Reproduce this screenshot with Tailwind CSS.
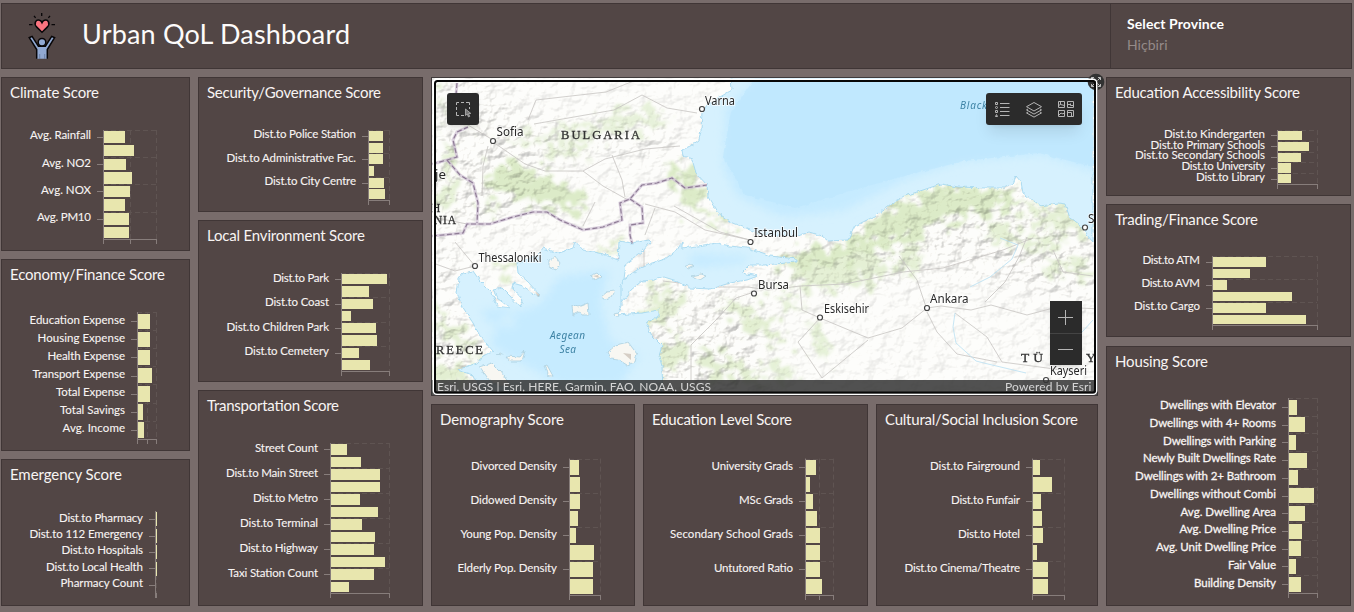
<!DOCTYPE html>
<html lang="en">
<head>
<meta charset="utf-8">
<title>Urban QoL Dashboard</title>
<script src="https://cdn.jsdelivr.net/npm/@tailwindcss/browser@4"></script>
</head>
<body class="h-[612px] w-[1354px] overflow-hidden bg-[#786c6b] pl-px pt-[3px] font-['Lato',sans-serif] text-[#fbf8f7]">

<header class="flex h-[66px] w-[1351px] border border-[#403636] bg-[#524645]">
  <div class="flex flex-1 items-center pl-[24px]">
    <svg class="h-[50px] w-[32px] shrink-0" viewBox="26 11 32 50" fill="none" stroke="#080608" stroke-width="1.5">
      <path d="M41.7 13v3M34 15.800l1.600 2.100M50 15.800l-1.600 2.100M29 24.700h3.500M51.500 24.700h3.500" stroke-width="1.300"/>
      <path d="M42 32.200l-5-4.800c-4-4-.8-8.500 2.600-7.200 1.300.4 2 1.400 2.400 2.400.4-1 1.100-2 2.400-2.400 3.400-1.300 6.600 3.200 2.600 7.200z" fill="#fb7580"/>
      <path d="M36.700 58.800V49.500L29.200 37.700l2.900-1.300 6.300 9.800h7l6.300-9.800 2.900 1.300-7.300 11.800v9.300" fill="#91a9d3"/>
      <circle cx="42" cy="42.300" r="3.800" fill="#91a9d3"/>
      <path d="M39.700 54v5M44.700 54v5" stroke-width=".7" stroke="#5e7195"/>
    </svg>
    <h1 class="ml-[24px]"><svg class="block h-16 w-[280px]" fill="#fdfbfa" font-family="Lato,sans-serif" font-size="27"><text x="0" y="39.500" textLength="268">Urban QoL Dashboard</text></svg></h1>
  </div>
  <div class="w-[241px] border-l border-[#403636] pl-4">
    <svg class="block h-16 w-[200px]" font-family="Lato,sans-serif" font-size="14"><text x="0" y="25" textLength="97" font-weight="700" fill="#fff">Select Province</text><text x="0" y="46" textLength="40.500" fill="#958b89">Hiçbiri</text></svg>
  </div>
</header>

<main class="mt-2 flex gap-2">
  <div class="flex w-[189px] flex-col gap-2">
    <section class="h-[174px] border border-[#403636] bg-[#524645]" data-chart="climate"></section>
    <section class="h-[192px] border border-[#403636] bg-[#524645]" data-chart="economy"></section>
    <section class="h-[147px] border border-[#403636] bg-[#524645]" data-chart="emergency"></section>
  </div>
  <div class="flex w-[225px] flex-col gap-2">
    <section class="h-[135px] border border-[#403636] bg-[#524645]" data-chart="security"></section>
    <section class="h-[162px] border border-[#403636] bg-[#524645]" data-chart="environment"></section>
    <section class="h-[216px] border border-[#403636] bg-[#524645]" data-chart="transport"></section>
  </div>
  <div class="flex w-[667px] flex-col gap-2">
    <section class="relative h-[319px]">
      <svg class="block h-[319px] w-[667px] overflow-visible" viewBox="431 77 667 319" font-family="'Noto Sans',sans-serif">
        <defs>
          <filter id="relief" x="0" y="0" width="1" height="1" color-interpolation-filters="sRGB">
            <feTurbulence type="fractalNoise" baseFrequency=".07 .09" numOctaves="4" seed="11"/>
            <feDiffuseLighting surfaceScale="5" diffuseConstant="1.270" lighting-color="#fffdf8"><feDistantLight azimuth="225" elevation="56"/></feDiffuseLighting>
          </filter>
          <filter id="rough" x="-.1" y="-.1" width="1.200" height="1.200">
            <feTurbulence type="fractalNoise" baseFrequency=".09" numOctaves="3" seed="4" result="n"/>
            <feDisplacementMap in="SourceGraphic" in2="n" scale="48" xChannelSelector="R" yChannelSelector="G"/>
            <feGaussianBlur stdDeviation="1.400"/>
          </filter>
          <filter id="coast" x="-.05" y="-.05" width="1.100" height="1.100" color-interpolation-filters="sRGB">
            <feTurbulence type="fractalNoise" baseFrequency=".2" numOctaves="2" seed="8" result="n"/>
            <feDisplacementMap in="SourceGraphic" in2="n" scale="4" xChannelSelector="R" yChannelSelector="G"/>
          </filter>
          <filter id="soft"><feGaussianBlur stdDeviation="5"/></filter>
          <filter id="soft2"><feGaussianBlur stdDeviation="14"/></filter>
          <mask id="hills" maskUnits="userSpaceOnUse" x="431" y="77" width="667" height="319">
            <rect x="431" y="77" width="667" height="319" fill="#505050"/>
            <g filter="url(#soft2)" fill="#ddd">
              <path d="M431 77h40l60 50 140 0v25H530l40 55-70 18-69 10z"/>
              <path d="M431 235l30 15 0 60 30 60-60 20zM640 290h110l20 110H660zM765 265l120-45 90-40 123 50v70l-150-30-183 20z"/>
            </g>
          </mask>
          <path id="blacksea" d="M731 77l1 13-12 7-13 8-5 8-1 17-2 10-7 5-10 5 1 6 9 3 4 14 11 12 1 12 9 15 13 10 20 8 8 4 40 2 11-4 13 4 6 5 20-1 7-14 20-10 16-12 14-8 36-12 17 3 27 1 20 0 8-4 3-8 5 6 2 11 18 13 17-3 7 1 5 14 10 8 6 8 7 8V77z"/>
          <path id="marmara" d="M682 248l15-2 20-3 13 3 17 2 16 5 7 3 27 3v3l-32 3-15 0-8 8 16 3-11 4-17 3-20 6-20-1-13-7-13-4-10 3-12 1-11 9-7 10-8 4-3-5 2-13 16-12 9-6 10-4 15-5 12-9 5-8z"/>
          <path id="aegean" d="M618 260l-15-6-20-4-8-9-2 7-15 5-15-5-6 8-20 7 1 10 9 8 13 14-3 1-14-10-10-3-1 5 11 12-3 7-10-11-8-8-9 2 4 8 13 10-13-2-5-13-12-12-7-10-10 2-4 5-2 15 5 13 11 17 7 13 13 15-10 5-6 7-20 7 16 5 10 21h180l-1-30-3-10 3-10-10-10-6-13 13-7v-6l-17 3-25 2 4-9v-21l3-6 2-15 16-12 9-10-2-2-17 3-13-2z"/>
          <clipPath id="seas"><use href="#blacksea"/><use href="#marmara"/><use href="#aegean"/></clipPath>
          <clipPath id="frame"><rect x="432" y="78" width="665" height="317"/></clipPath>
        </defs>
        <rect x="431" y="77" width="667" height="319" fill="#403a3b"/>
        <g clip-path="url(#frame)">
          <rect x="431" y="77" width="667" height="319" fill="#fdfdfb"/>
          <g filter="url(#rough)" fill="#dcebc8">
            <path d="M433 90l20 20 35 22 50 8 25-14 30-2 25-12 40-2 12 12-40 8-35 6-40 2-30 8-30-12-40-14-22-20z" opacity=".65"/>
            <path d="M486 170l20-8 25 8 30 12 25 20-6 12-22-2-25-12-30-4-18-10z"/>
            <path d="M440 175l20 10 0 20-24 5zM482 195l18 15-18 5zM446 142l12 10-8 25-12-20zM540 150l35-5 20 6-35 12z" opacity=".75"/>
            <path d="M667 165l24 6 8 16 6 26 25 16-8 2-28-18-16-26z"/>
            <path d="M433 300l15 20 20 20 15 20-18-8-32-30zM430 360l30 8 15 8-45 12zM590 250l30-10 5 12-25 4zM500 262l12 5 0 14-14-4z" opacity=".8"/>
            <path d="M640 312l26-12 20 0-12 18-32 12zM646 290l30 0-20 14zM718 300l32 4 15 14 22 14-14 14-32-20zM650 350l28-14 12 16-26 20zM700 350l40 10 30 20-60 0z" opacity=".8"/>
            <path d="M864 226l40-24 48-18 50 6 20 12-36 14-44 6-22 16-60 14-30 18-60-6 30-14 50-6z"/>
            <path d="M1020 195l20 14 40 0 10 20-30 4-34-16zM990 225l40 10 40 6-30 10-50-8zM1040 262l40 0 14 14-40-2zM790 262l60-14 40 10-20 26-70 6zM902 245l20 10-12 26-12-16z" opacity=".75"/>
            <path d="M808 320l18 14 4 30-14-12zM765 362l25 0 8 18-26 0zM770 290l24 8 14 14-24-6z" opacity=".7"/>
          </g>
          <rect x="431" y="77" width="667" height="319" filter="url(#relief)" mask="url(#hills)" class="mix-blend-multiply" opacity=".36"/>
          <g fill="none" stroke="#c7c4c2" stroke-width=".8">
            <path d="M493 142l32 22 20 7h38l22-12 40-10 35-3M583 171l20 15 25 14M697 113l-30-5-25-13-28 15-80 14M493 140l-30-18M488 146l-5 20-1 30M528 120l8-20 70-8 30-12M612 155l10 25 3 17M645 204l30 8 30 18 45 10M655 208l-10 27M475 266l-20 5-22-8M475 266l-20-24M644 247v20M750 240l-30-8-46-26"/>
            <path d="M663 281l50 6h35l20 3 32-4 45-2 58-12 40-4 60-18 30-12M754 292l-18 6-20 22-25 25 0 35M800 286l2 24 18 8 48 20 34-10 25-20 14-2 30 4 20-5 36 10 30-8 45 2M820 318l-22 24 24 36 46-38M927 310l-10-30-18-24M927 312l10 20 20 22 40 8M955 313l32 24 15 25 60 8M985 302l20-20 14-25 8-20M1053 250l10 22 30 4"/>
            <path d="M595 202l-12 24M437 218l30 6 23 0"/>
          </g>
          <path d="M970 287l20-10 22-18 6-14-18-7M955 313l-2 14 3 16 20 18 12 3 38 9M1093 320l-20 22" fill="none" stroke="#b9e0f3" stroke-width=".8"/>
          <path d="M432 164l15-4 10-3-4-17 4-8 11-5M457 83l-1 12M447 160l13 15 13 8 5 20-1 20M432 236l31-3 4-9h23l23-7 20-5h14l13 8 23 10 20-3 19-7-2-17 10-4 12-14 15-2 15-5 13 10 22-3M630 199l12 8 1 16-13 2v10l2 8-5 10-9 7" fill="none" stroke="#cfc2d4" stroke-width="3" opacity=".75"/>
          <path d="M432 164l15-4 10-3-4-17 4-8 11-5M457 83l-1 12M447 160l13 15 13 8 5 20-1 20M432 236l31-3 4-9h23l23-7 20-5h14l13 8 23 10 20-3 19-7-2-17 10-4 12-14 15-2 15-5 13 10 22-3M630 199l12 8 1 16-13 2v10l2 8-5 10-9 7" fill="none" stroke="#8f7d96" stroke-width="1.200" stroke-dasharray="5 2.500"/>
          <g filter="url(#coast)">
            <g fill="#d6f1fe" stroke="#9ed4ee" stroke-width=".8"><use href="#blacksea"/><use href="#marmara"/><use href="#aegean"/></g>
            <g clip-path="url(#seas)">
              <g filter="url(#soft)" fill="#c6ebff">
                <path d="M760 77l-34 30-3 60 15 30 45 20 60-6 60-30 60-20 80-6 55 18V77z"/>
                <path d="M500 318l40-14 20-28 50-6-10 30 10 40 30 15-20 30h-60l-70-40zM690 254l60 2-5 7-55 5zM480 310l8 12 28 6-6-20z"/>
              </g>
              <path d="M756 77l-25 35-8 45 22 38 50 13 55-17 62-17 52-13 75-8 58 15V77z" fill="#bde7fe" opacity=".65"/>
            </g>
            <g fill="#f8f7f2" stroke="#a9cfe0" stroke-width=".8">
              <path d="M549 260l7-3 4 6-4 7-7-3zM590 276l7-3 4 4-6 3zM601 297l6-5 8-1-3 6-8 2zM572 305l6 2 10-4 1 12-6 0-2-4-8 4zM614 314l4-1 1 4-4 0zM608 352l8-7 12-3 9 12-2 8-8 3-8-5-8-1zM684 267l6-3 4 2-6 3zM692 276l8-2 6 2-6 4zM480 367l12-4 8 8 12 16-20-3zM497 354l4-1 1 2zM506 356l14 1 5-6-3 10-12 0zM544 366l3-1 6 11-4 0z"/>
            </g>
          </g>
          <g fill="#c3b9ac" opacity=".65"><path d="M535 291l5 4-2 2zM593 276l5-1 1 3zM623 353l8 1 0 6z"/></g>
          <g fill="#fff" stroke="#444" stroke-width="1.200"><circle cx="493" cy="141" r="2.500"/><circle cx="702" cy="109" r="2.500"/><circle cx="475" cy="266" r="2.500"/><circle cx="750.500" cy="242" r="2.500"/><circle cx="754" cy="293.500" r="2.500"/><circle cx="820" cy="317.500" r="2.500"/><circle cx="927" cy="308" r="2.500"/><circle cx="1085" cy="227.500" r="2.500"/><circle cx="1046" cy="380" r="2.500"/></g>
          <g fill="#282828" font-size="12.500" stroke="#fff" stroke-width="2" stroke-opacity=".65" paint-order="stroke">
            <text x="705" y="104.500" textLength="30" lengthAdjust="spacingAndGlyphs">Varna</text><text x="496.500" y="136" textLength="27" lengthAdjust="spacingAndGlyphs">Sofia</text>
            <text x="478.500" y="262" textLength="63" lengthAdjust="spacingAndGlyphs">Thessaloniki</text><text x="754" y="237" textLength="44" lengthAdjust="spacingAndGlyphs">Istanbul</text>
            <text x="758" y="288.500" textLength="31" lengthAdjust="spacingAndGlyphs">Bursa</text><text x="824" y="313" textLength="45" lengthAdjust="spacingAndGlyphs">Eskisehir</text>
            <text x="930" y="303" textLength="38.500" lengthAdjust="spacingAndGlyphs">Ankara</text><text x="1050" y="375" textLength="37" lengthAdjust="spacingAndGlyphs">Kayseri</text>
            <text x="1088" y="223" textLength="13" lengthAdjust="spacingAndGlyphs">Sa</text><text x="435" y="179" textLength="11" lengthAdjust="spacingAndGlyphs">je</text>
          </g>
          <g fill="#333" stroke="#333" stroke-width=".3" font-family="'Liberation Serif',serif" font-size="12.500">
            <text x="561" y="139" textLength="79">BULGARIA</text><text x="432" y="212" font-size="11.500">H</text><text x="434" y="223.500" textLength="22" font-size="11.500">NIA</text>
            <text x="436" y="354" textLength="47">REECE</text><text x="1021" y="362" font-size="13.500" textLength="22">TÜ</text><text x="1086" y="362" font-size="13.500">Y</text>
          </g>
          <g fill="#3e83a5" font-style="italic" font-size="10">
            <text x="960" y="109" textLength="27">Black</text><text x="550" y="339" textLength="35">Aegean</text><text x="559.500" y="352.500" textLength="16.500">Sea</text>
          </g>
        </g>
        <rect x="431" y="380" width="667" height="15" fill="#343434" fill-opacity=".86"/>
        <text x="437" y="391" textLength="274" fill="#d5d5d5" font-family="Lato" font-size="12">Esri, USGS | Esri, HERE, Garmin, FAO, NOAA, USGS</text>
        <text x="1005" y="391" textLength="86.500" fill="#d5d5d5" font-family="Lato" font-size="12">Powered by Esri</text>
        <circle cx="1096" cy="82" r="8.300" fill="#323232"/>
        <g fill="none" stroke="#bbb" stroke-width="1"><path d="M1097.500 80.500l3-3M1098 77.500h2.500v2.500M1094.500 83.500l-3 3M1094 86.500h-2.500v-2.500M1097.500 83.500l3 3M1098 86.500h2.500v-2.500M1094.500 80.500l-3-3M1094 77.500h-2.500v2.500"/></g>
        <rect x="433.300" y="79.300" width="663.400" height="315" rx="3.500" fill="none" stroke="#fff" stroke-width="1.400"/>
        <rect x="435" y="81" width="660" height="311.500" rx="2.500" fill="none" stroke="#080808" stroke-width="2"/>
      </svg>
      <div class="absolute left-[16px] top-[16px] h-8 w-8 rounded-[3px] bg-[#2b2b2b] shadow-md">
        <svg class="h-8 w-8" viewBox="0 0 32 32" fill="none" stroke="#b5b5b5"><path d="M9.500 12V9.500H12M14 9.500h3M19 9.500h3.500V12M22.500 14v2M9.500 14v3M9.500 19v3.500H12M14 22.500h3"/><path d="M18.500 16v6.500l1.700-1.500 1.300 3 1.200-.6-1.200-2.800 2.300-.2z" fill="#777" stroke-width=".8"/></svg>
      </div>
      <div class="absolute left-[555px] top-[16px] flex h-8 w-24 rounded-[3px] bg-[#2b2b2b] shadow-lg">
        <svg class="h-8 w-8" viewBox="0 0 32 32" fill="none" stroke="#b5b5b5"><path d="M14 10.500h9.500M14 14.500h9.500M14 18.500h9.500M14 22.500h9.500"/><path d="M9.500 9.500h2v2h-2zM9.500 17.500h2v2h-2z"/><circle cx="10.500" cy="14.500" r="1"/><path d="M9.500 23.500l1-2 1 2z"/></svg>
        <svg class="h-8 w-8" viewBox="0 0 32 32" fill="none" stroke="#b5b5b5"><path d="M16 9.500l7.500 4.200-7.500 4.300-7.500-4.300zM10 16l-1.500.9 7.500 4.200 7.500-4.200-1.500-.9M10 19l-1.500.9 7.500 4.200 7.500-4.200-1.500-.9"/></svg>
        <svg class="h-8 w-8" viewBox="0 0 32 32" fill="none" stroke="#b5b5b5"><path d="M8.500 8.500h6v6h-6zM17.500 8.500h6v6h-6zM8.500 17.500h6v6h-6zM17.500 17.500h6v6h-6zM10.500 8.500v3l4 1M8.500 12.500l2-1M20.500 10.500v2h3M17.500 11.500h3M9 22l2-2 2 1 1.500-1.500M17.500 19.500h4v4"/></svg>
      </div>
      <div class="absolute left-[619px] top-[224px] h-16 w-8 bg-[#2b2b2b] shadow-md">
        <svg class="h-16 w-8" viewBox="0 0 32 64" fill="none" stroke="#b5b5b5"><path d="M8 16.500h15M15.500 9v15M8 48.500h15"/><path d="M0 32.500h32" stroke="#444"/></svg>
      </div>
    </section>
    <div class="flex gap-2">
      <section class="h-[202px] w-[204px] border border-[#403636] bg-[#524645]" data-chart="demography"></section>
      <section class="h-[202px] w-[225px] border border-[#403636] bg-[#524645]" data-chart="education"></section>
      <section class="h-[202px] w-[222px] border border-[#403636] bg-[#524645]" data-chart="cultural"></section>
    </div>
  </div>
  <div class="flex w-[245px] flex-col gap-2">
    <section class="h-[119px] border border-[#403636] bg-[#524645]" data-chart="access"></section>
    <section class="h-[133px] border border-[#403636] bg-[#524645]" data-chart="trading"></section>
    <section class="mt-px h-[260px] border border-[#403636] bg-[#524645]" data-chart="housing"></section>
  </div>
</main>

<script>
// box: x, y, w, h of the panel; plot: axis x, top, bottom, right; ends: bar tips; labels: [text, left x]
const charts = {
  climate: {title:['Climate Score',89], box:[1,77,189,174], plot:[103,130,239,156], mid:130, step:2, right:91, ends:[125,134,126,132,130,125,129,129], labels:[['Avg. Rainfall',30],['Avg. NO2',42],['Avg. NOX',41],['Avg. PM10',37]]},
  economy: {title:['Economy/Finance Score',155], box:[1,259,189,192], plot:[137,312,439,156], mid:147, step:1, right:125, ends:[150,150,150,152,150,143,144], labels:[['Education Expense',29.5],['Housing Expense',37.5],['Health Expense',47.5],['Transport Expense',32.5],['Total Expense',56],['Total Savings',60],['Avg. Income',62.5]]},
  emergency: {title:['Emergency Score',112], box:[1,459,189,147], plot:[155,511,593,156], step:1, right:143, ends:[157,157,157,157,156], labels:[['Dist.to Pharmacy',59],['Dist.to 112 Emergency',29.5],['Dist.to Hospitals',61.5],['Dist.to Local Health',46],['Pharmacy Count',60.5]]},
  security: {title:['Security/Governance Score',174], box:[198,77,225,135], plot:[368,130,200,389], step:2, right:356, ends:[383,383,383,374,384,385], labels:[['Dist.to Police Station',253.5],['Dist.to Administrative Fac.',226.5],['Dist.to City Centre',264.5]]},
  environment: {title:['Local Environment Score',158], box:[198,220,225,162], plot:[341,273,371,389], step:2, right:329, ends:[387,369,373,351,376,377,359,370], labels:[['Dist.to Park',273],['Dist.to Coast',265],['Dist.to Children Park',226.5],['Dist.to Cemetery',244.5]]},
  transport: {title:['Transportation Score',132], box:[198,390,225,216], plot:[330,443,593,389], step:2, right:318, ends:[347,361,380,380,360,378,362,375,374,385,374,349], labels:[['Street Count',255],['Dist.to Main Street',226],['Dist.to Metro',253],['Dist.to Terminal',240],['Dist.to Highway',239.5],['Taxi Station Count',228]]},
  demography: {title:['Demography Score',124], box:[431,404,204,202], plot:[569,458.6,595,600], step:2, right:557, ends:[579,580,580,578,576,594,593,593], labels:[['Divorced Density',471],['Didowed Density',470.5],['Young Pop. Density',460.5],['Elderly Pop. Density',457.5]]},
  education: {title:['Education Level Score',140], box:[643,404,225,202], plot:[805,458.6,595,833], mid:819, step:2, right:793, ends:[816,810,813,817,820,820,820,822], labels:[['University Grads',711.5],['MSc Grads',739],['Secondary School Grads',670],['Untutored Ratio',714]]},
  cultural: {title:['Cultural/Social Inclusion Score',193], box:[876,404,222,202], plot:[1032,458.6,595,1064], step:2, right:1020, ends:[1040,1052,1041,1042,1043,1037,1048,1048], labels:[['Dist.to Fairground',930],['Dist.to Funfair',951],['Dist.to Hotel',958],['Dist.to Cinema/Theatre',904.5]]},
  access: {title:['Education Accessibility Score',185], box:[1106,77,245,119], plot:[1277,130,184,1317], step:1, right:1265, ends:[1302,1309,1301,1291,1291], labels:[['Dist.to Kindergarten',1164],['Dist.to Primary Schools',1150.5],['Dist.to Secondary Schools',1135],['Dist.to University',1181.5],['Dist.to Library',1196]]},
  trading: {title:['Trading/Finance Score',143], box:[1106,204,245,133], plot:[1212,256,325,1317], step:2, right:1200, ends:[1266,1250,1227,1292,1266,1306], labels:[['Dist.to ATM',1142.5],['Dist.to AVM',1141.5],['Dist.to Cargo',1134]]},
  housing: {title:['Housing Score',93], box:[1106,346,245,260], plot:[1288,398,593,1317], step:1, right:1276, bold:true, ends:[1297,1305,1296,1307,1298,1314,1305,1302,1301,1296,1301], labels:[['Dwellings with Elevator',1160],['Dwellings with 4+ Rooms',1149.5],['Dwellings with Parking',1163],['Newly Built Dwellings Rate',1143],['Dwellings with 2+ Bathroom',1135],['Dwellings without Combi',1150],['Avg. Dwelling Area',1180.5],['Avg. Dwelling Price',1179.5],['Avg. Unit Dwelling Price',1156],['Fair Value',1228],['Building Density',1194]]}
};
for (const el of document.querySelectorAll('[data-chart]')) {
  const c = charts[el.dataset.chart], [x, y, w, h] = c.box, [ax, top, bot, right] = c.plot;
  const band = (bot - top) / c.ends.length;
  let s = `<text x="${x + 9}" y="${y + 21.4}" font-size="15" textLength="${c.title[1]}">${c.title[0]}</text>`;
  for (let i = 0; i < c.ends.length; i += c.step) {
    const gy = Math.floor(top + i * band + .4) + .5;
    s += `<path d="M${ax} ${gy}H${right}" stroke="#5f5452" stroke-dasharray="5 3"/>`;
  }
  for (const gx of [c.mid, right]) if (gx) s += `<path d="M${gx + .5} ${top}V${bot}" stroke="#5f5452" stroke-dasharray="5 3"/><path d="M${gx + .5} ${bot}v5" stroke="#877d7b"/>`;
  c.ends.forEach((e, i) => {
    const y0 = Math.round(top + i * band + band * .07 + .3), y1 = Math.round(top + (i + 1) * band - band * .07 + .1);
    s += `<rect x="${ax}" y="${y0}" width="${e - ax}" height="${y1 - y0}" fill="#e8e6ae"/>`;
  });
  s += `<path d="M${ax + .5} ${top}V${bot + 5}M${ax} ${bot + .5}H${right + 1}" stroke="#877d7b" fill="none"/>`;
  c.labels.forEach(([t, lx], i) => {
    const cy = top + (i * c.step + .5) * band;
    s += `<path d="M${ax - 6} ${Math.round(cy) + .5}h6" stroke="#877d7b"/><text x="${lx}" y="${(cy + 2.4).toFixed(1)}" textLength="${c.right - lx}" stroke="#f8f4f3" stroke-width="${c.bold ? .3 : .1}">${t}</text>`;
  });
  el.innerHTML = `<svg class="block" width="${w - 2}" height="${h - 2}" viewBox="${x + 1} ${y + 1} ${w - 2} ${h - 2}" font-family="Lato,sans-serif" font-size="11.5" fill="#f8f4f3" stroke-width="1">${s}</svg>`;
}
</script>
</body>
</html>
